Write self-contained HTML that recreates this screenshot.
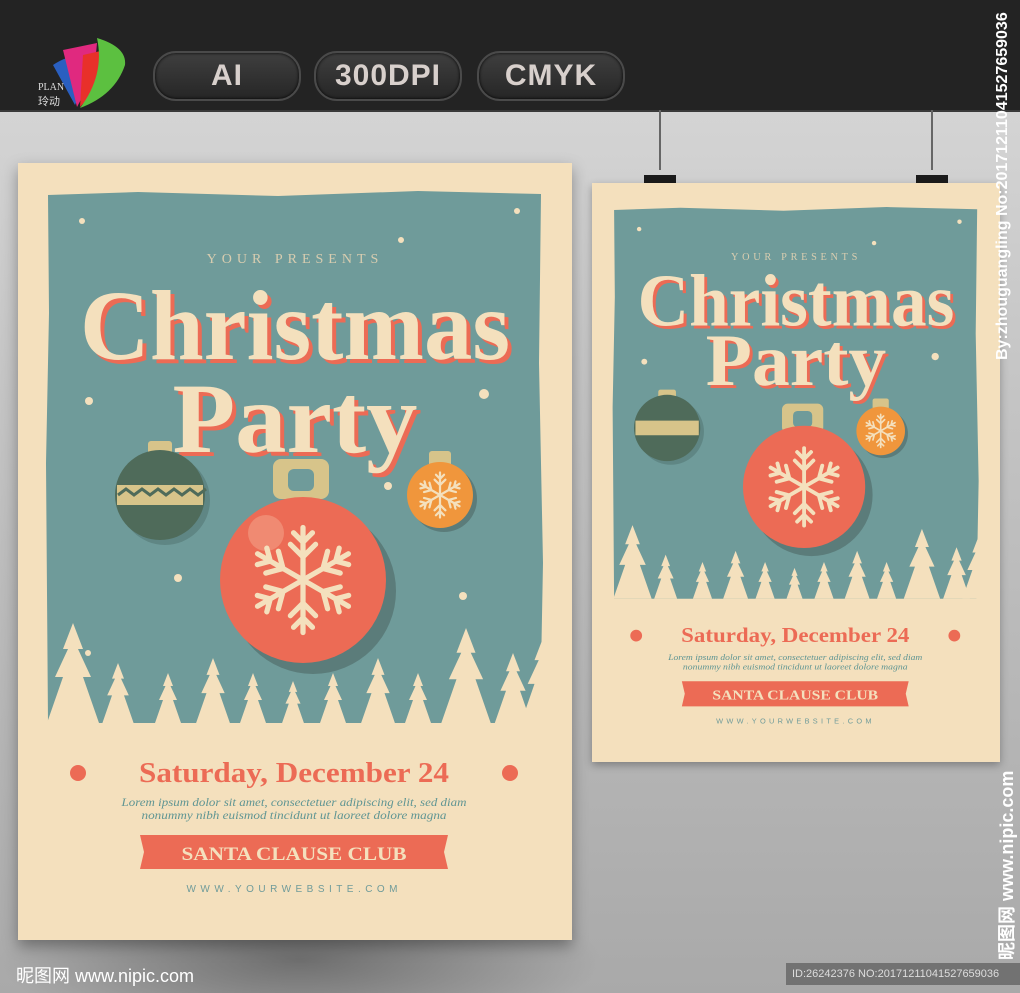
<!DOCTYPE html>
<html><head><meta charset="utf-8"><style>
*{margin:0;padding:0}
body{width:1020px;height:993px;overflow:hidden;position:relative;font-family:"Liberation Sans","Noto Sans CJK SC",sans-serif;
background:radial-gradient(ellipse 300px 80px at 300px 960px,#6e6e6e,rgba(0,0,0,0)),linear-gradient(#d4d4d4 110px,#c4c4c4 400px,#a9a9a9 993px)}
#hdr{position:absolute;left:0;top:0;width:1020px;height:110px;background:#232323;border-bottom:2px solid #3a3a3a}
.pill{position:absolute;top:51px;width:144px;height:46px;border-radius:23px;background:linear-gradient(#3f3f3f,#262626);border:2px solid #4a4a4a;box-shadow:0 0 3px #000 inset;color:#d8d0cc;font-size:30px;text-align:center;line-height:46px;letter-spacing:1px;font-weight:bold}
.poster{position:absolute;background:#f4e0bd}
.vt{position:absolute;color:#fff;font-size:14px;white-space:nowrap;transform-origin:0 0;transform:rotate(-90deg)}
.clip{position:absolute;width:32px;height:15px;background:#1b1b1b;top:175px}
.wire{position:absolute;width:2px;background:#666;top:110px;height:60px}
</style></head><body>
<div id="hdr">
<svg style="position:absolute;left:35px;top:35px" width="100" height="75" viewBox="0 0 100 75">
<path d="M18,30 Q40,15 60,25 L40,70Z" fill="#2a5fc0"/>
<path d="M28,15 L62,8 Q60,40 42,72Z" fill="#e0297f"/>
<path d="M48,20 L70,15 Q68,50 45,72Z" fill="#e8302a"/>
<path d="M62,3 Q92,12 90,30 Q80,60 45,73 Q70,40 62,3Z" fill="#5cc040"/>
<text x="3" y="55" font-family="Liberation Serif" font-size="10" fill="#ddd">PLAN</text>
<text x="3" y="70" font-family="Noto Sans CJK SC" font-size="11" fill="#ddd">玲动</text>
</svg>
<div class="pill" style="left:153px">AI</div>
<div class="pill" style="left:314px">300DPI</div>
<div class="pill" style="left:477px">CMYK</div>
</div>
<div class="wire" style="left:659px"></div><div class="wire" style="left:931px"></div>
<div class="clip" style="left:644px"></div><div class="clip" style="left:916px"></div>

<div class="poster" style="left:18px;top:163px;width:554px;height:777px;box-shadow:0 6px 14px rgba(0,0,0,.35)">
<svg width="554" height="777" viewBox="0 0 554 777" id="P">
<defs>
<path id="tr" d="M0,-100 L-10,-74 L-5,-74 L-18,-46 L-10,-46 L-26,0 L26,0 L10,-46 L18,-46 L5,-74 L10,-74Z" fill="#f4e0bd"/>
<g id="sf" stroke="#f4e0bd" stroke-width="5" stroke-linecap="round" fill="none">
<g id="arm"><path d="M0,0 V-50 M0,-22 L-12,-34 M0,-22 L12,-34 M0,-36 L-9,-45 M0,-36 L9,-45"/></g>
<use href="#arm" transform="rotate(60)"/><use href="#arm" transform="rotate(120)"/><use href="#arm" transform="rotate(180)"/><use href="#arm" transform="rotate(240)"/><use href="#arm" transform="rotate(300)"/>
</g>
</defs>
<path d="M30,32 L120,29 L260,33 L400,28 L523,31 L521,200 L525,400 L522,560 L30,560 L28,300 L31,150Z" fill="#6f9b9a"/>
<g fill="#f4e0bd">
<circle cx="64" cy="58" r="3"/><circle cx="499" cy="48" r="3"/><circle cx="383" cy="77" r="3"/><circle cx="71" cy="238" r="4"/><circle cx="466" cy="231" r="5"/><circle cx="370" cy="323" r="4"/><circle cx="160" cy="415" r="4"/><circle cx="445" cy="433" r="4"/><circle cx="70" cy="490" r="3"/></g>
<text x="277" y="100" text-anchor="middle" font-family="Liberation Serif" font-size="14" letter-spacing="5" fill="#d8cdb0">YOUR PRESENTS</text>
<g font-family="Liberation Serif" font-weight="bold" font-size="100" text-anchor="middle">
<text x="281" y="200" fill="#ec6b55" textLength="430" lengthAdjust="spacingAndGlyphs">Christmas</text>
<text x="277" y="196" fill="#f4e0bd" textLength="430" lengthAdjust="spacingAndGlyphs">Christmas</text>
<text x="281" y="293" fill="#ec6b55" textLength="245" lengthAdjust="spacingAndGlyphs">Party</text>
<text x="277" y="289" fill="#f4e0bd" textLength="245" lengthAdjust="spacingAndGlyphs">Party</text>
</g>
<rect x="130" y="278" width="24" height="18" rx="3" fill="#d7c48a"/>
<circle cx="147" cy="337" r="45" fill="#5f8684"/>
<circle cx="142" cy="332" r="45" fill="#4f6b5a"/>
<path d="M99,322 H185 V342 H99Z" fill="#d7c48a"/>
<path d="M100,332 l8,-6 8,6 8,-6 8,6 8,-6 8,6 8,-6 8,6 8,-6 8,6 8,-6" stroke="#4f6b5a" stroke-width="3" fill="none"/>
<rect x="255" y="296" width="56" height="40" rx="8" fill="#d7c48a"/><rect x="270" y="306" width="26" height="22" rx="6" fill="#6f9b9a"/>
<circle cx="295" cy="428" r="83" fill="#5b7c7a"/>
<circle cx="285" cy="417" r="83" fill="#ec6b55"/>
<circle cx="248" cy="370" r="18" fill="#f08a72"/>
<use href="#sf" transform="translate(285,417) scale(1.05)"/>
<rect x="411" y="288" width="22" height="16" rx="3" fill="#d7c48a"/>
<circle cx="426" cy="336" r="33" fill="#5b7c7a"/>
<circle cx="422" cy="332" r="33" fill="#f0963c"/>
<use href="#sf" transform="translate(422,332) scale(0.45)"/>
<use href="#tr" transform="translate(55,560) scale(1.0)"/><use href="#tr" transform="translate(100,560) scale(0.6)"/>
<use href="#tr" transform="translate(150,560) scale(0.5)"/><use href="#tr" transform="translate(195,560) scale(0.65)"/>
<use href="#tr" transform="translate(235,560) scale(0.5)"/><use href="#tr" transform="translate(275,560) scale(0.42)"/>
<use href="#tr" transform="translate(315,560) scale(0.5)"/><use href="#tr" transform="translate(360,560) scale(0.65)"/>
<use href="#tr" transform="translate(400,560) scale(0.5)"/><use href="#tr" transform="translate(448,560) scale(0.95)"/>
<use href="#tr" transform="translate(495,560) scale(0.7)"/><use href="#tr" transform="translate(525,560) scale(0.85)"/>
<circle cx="60" cy="610" r="8" fill="#ec6b55"/><circle cx="492" cy="610" r="8" fill="#ec6b55"/>
<text x="276" y="619" text-anchor="middle" font-family="Liberation Serif" font-weight="bold" font-size="28" fill="#ec6b55" textLength="310" lengthAdjust="spacingAndGlyphs">Saturday, December 24</text>
<g font-family="Liberation Serif" font-style="italic" font-size="11.5" fill="#5f9593" text-anchor="middle">
<text x="276" y="643" textLength="345" lengthAdjust="spacingAndGlyphs">Lorem ipsum dolor sit amet, consectetuer adipiscing elit, sed diam</text>
<text x="276" y="656" textLength="305" lengthAdjust="spacingAndGlyphs">nonummy nibh euismod tincidunt ut laoreet dolore magna</text></g>
<path d="M122,672 H430 L426,689 L430,706 H122 L126,689Z" fill="#ec6b55"/>
<text x="276" y="697" text-anchor="middle" font-family="Liberation Serif" font-weight="bold" font-size="19" fill="#f4e0bd" textLength="225" lengthAdjust="spacingAndGlyphs">SANTA CLAUSE CLUB</text>
<text x="276" y="729" text-anchor="middle" font-family="Liberation Sans" font-size="10" letter-spacing="4" fill="#6f9b9a" textLength="215">WWW.YOURWEBSITE.COM</text>
</svg></div>

<div class="poster" style="left:592px;top:183px;width:408px;height:579px;box-shadow:0 3px 8px rgba(0,0,0,.3)">
<svg width="408" height="579" viewBox="0 0 554 777">
<path d="M30,32 L120,29 L260,33 L400,28 L523,31 L521,200 L525,400 L522,560 L30,560 L28,300 L31,150Z" fill="#6f9b9a"/>
<g fill="#f4e0bd"><circle cx="64" cy="58" r="3"/><circle cx="499" cy="48" r="3"/><circle cx="383" cy="77" r="3"/><circle cx="71" cy="238" r="4"/><circle cx="466" cy="231" r="5"/></g>
<text x="277" y="100" text-anchor="middle" font-family="Liberation Serif" font-size="14" letter-spacing="5" fill="#d8cdb0">YOUR PRESENTS</text>
<g font-family="Liberation Serif" font-weight="bold" font-size="100" text-anchor="middle">
<text x="281" y="193" fill="#ec6b55" textLength="430" lengthAdjust="spacingAndGlyphs">Christmas</text>
<text x="277" y="189" fill="#f4e0bd" textLength="430" lengthAdjust="spacingAndGlyphs">Christmas</text>
<text x="281" y="274" fill="#ec6b55" textLength="245" lengthAdjust="spacingAndGlyphs">Party</text>
<text x="277" y="270" fill="#f4e0bd" textLength="245" lengthAdjust="spacingAndGlyphs">Party</text></g>
<rect x="90" y="276" width="24" height="18" rx="3" fill="#d7c48a"/>
<circle cx="107" cy="333" r="45" fill="#5f8684"/><circle cx="102" cy="328" r="45" fill="#4f6b5a"/>
<path d="M59,318 H145 V338 H59Z" fill="#d7c48a"/>
<rect x="258" y="295" width="56" height="40" rx="8" fill="#d7c48a"/><rect x="273" y="305" width="26" height="22" rx="6" fill="#6f9b9a"/>
<circle cx="298" cy="419" r="83" fill="#5b7c7a"/><circle cx="288" cy="408" r="83" fill="#ec6b55"/>
<use href="#sf" transform="translate(288,408) scale(1.05)"/>
<rect x="381" y="288" width="22" height="16" rx="3" fill="#d7c48a"/>
<circle cx="396" cy="336" r="33" fill="#5b7c7a"/><circle cx="392" cy="332" r="33" fill="#f0963c"/>
<use href="#sf" transform="translate(392,332) scale(0.45)"/>
<use href="#tr" transform="translate(55,560) scale(1.0)"/><use href="#tr" transform="translate(100,560) scale(0.6)"/>
<use href="#tr" transform="translate(150,560) scale(0.5)"/><use href="#tr" transform="translate(195,560) scale(0.65)"/>
<use href="#tr" transform="translate(235,560) scale(0.5)"/><use href="#tr" transform="translate(275,560) scale(0.42)"/>
<use href="#tr" transform="translate(315,560) scale(0.5)"/><use href="#tr" transform="translate(360,560) scale(0.65)"/>
<use href="#tr" transform="translate(400,560) scale(0.5)"/><use href="#tr" transform="translate(448,560) scale(0.95)"/>
<use href="#tr" transform="translate(495,560) scale(0.7)"/><use href="#tr" transform="translate(525,560) scale(0.85)"/>
<circle cx="60" cy="610" r="8" fill="#ec6b55"/><circle cx="492" cy="610" r="8" fill="#ec6b55"/>
<text x="276" y="619" text-anchor="middle" font-family="Liberation Serif" font-weight="bold" font-size="28" fill="#ec6b55" textLength="310" lengthAdjust="spacingAndGlyphs">Saturday, December 24</text>
<g font-family="Liberation Serif" font-style="italic" font-size="11.5" fill="#5f9593" text-anchor="middle">
<text x="276" y="643" textLength="345" lengthAdjust="spacingAndGlyphs">Lorem ipsum dolor sit amet, consectetuer adipiscing elit, sed diam</text>
<text x="276" y="656" textLength="305" lengthAdjust="spacingAndGlyphs">nonummy nibh euismod tincidunt ut laoreet dolore magna</text></g>
<path d="M122,672 H430 L426,689 L430,706 H122 L126,689Z" fill="#ec6b55"/>
<text x="276" y="697" text-anchor="middle" font-family="Liberation Serif" font-weight="bold" font-size="19" fill="#f4e0bd" textLength="225" lengthAdjust="spacingAndGlyphs">SANTA CLAUSE CLUB</text>
<text x="276" y="729" text-anchor="middle" font-family="Liberation Sans" font-size="10" letter-spacing="4" fill="#6f9b9a" textLength="215">WWW.YOURWEBSITE.COM</text>
</svg></div>

<div class="vt" style="left:994px;top:360px;font-size:16px;font-weight:bold">By:zhouguangling No:20171211041527659036</div>
<div class="vt" style="left:993px;top:960px;font-size:18px;font-weight:bold">昵图网 www.nipic.com</div>
<div style="position:absolute;left:16px;top:962px;color:#fff;font-size:18px">昵图网 www.nipic.com</div>
<div style="position:absolute;left:786px;top:963px;width:228px;height:22px;background:rgba(90,90,90,.7);color:#ddd;font-size:11px;line-height:22px;padding-left:6px">ID:26242376 NO:20171211041527659036</div>
</body></html>
